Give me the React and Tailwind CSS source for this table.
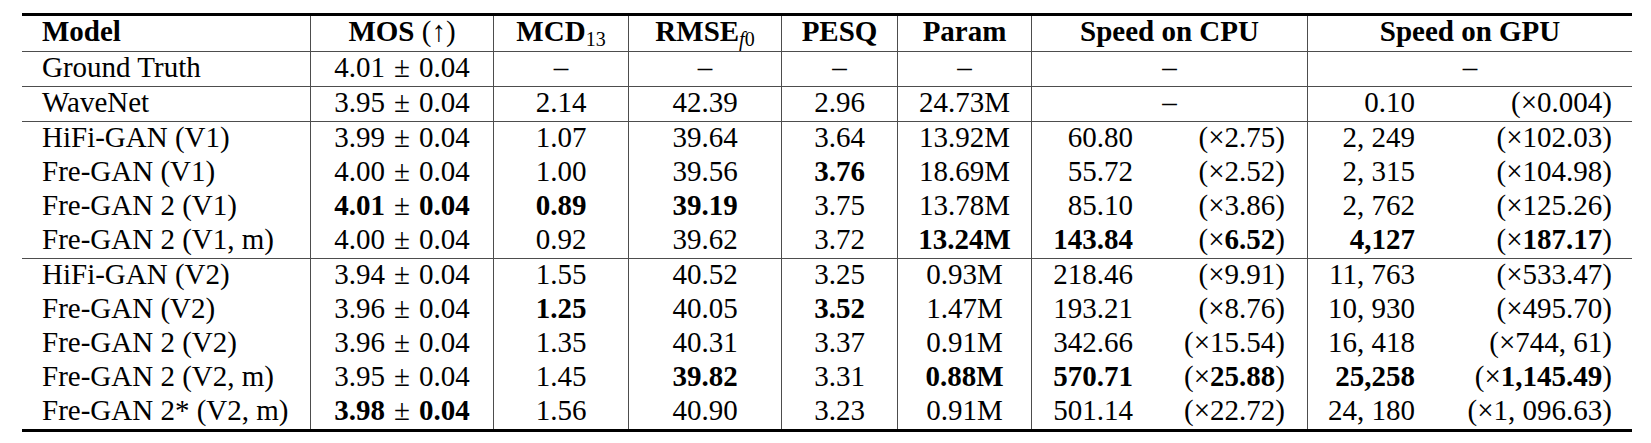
import React from 'react';

const cols = 'grid grid-cols-[288px_183px_135px_153px_116px_134px_276px_325px]';

const B = ({ children }) => <span className="font-bold">{children}</span>;

// math-style ± with wider spacing, like LaTeX binary operators
const PM = () => <span className="px-[9px] font-normal">±</span>;

const pm = (a, b, bold) =>
  bold ? (
    <>
      <B>{a}</B>
      <PM />
      <B>{b}</B>
    </>
  ) : (
    <>
      {a}
      <PM />
      {b}
    </>
  );

const ratio = (v, bold) => (
  <>
    (×{bold ? <B>{v}</B> : v})
  </>
);

// speed cells: [value, ratio] or null for a dash
const rows = [
  {
    group: 0,
    name: 'Ground Truth',
    mos: pm('4.01', '0.04'),
    mcd: '–', rmse: '–', pesq: '–', param: '–',
    cpu: null, gpu: null,
  },
  {
    group: 0,
    name: 'WaveNet',
    mos: pm('3.95', '0.04'),
    mcd: '2.14', rmse: '42.39', pesq: '2.96', param: '24.73M',
    cpu: null, gpu: ['0.10', ratio('0.004')],
  },
  {
    group: 1,
    name: 'HiFi-GAN (V1)',
    mos: pm('3.99', '0.04'),
    mcd: '1.07', rmse: '39.64', pesq: '3.64', param: '13.92M',
    cpu: ['60.80', ratio('2.75')], gpu: ['2, 249', ratio('102.03')],
  },
  {
    group: 1,
    name: 'Fre-GAN (V1)',
    mos: pm('4.00', '0.04'),
    mcd: '1.00', rmse: '39.56', pesq: <B>3.76</B>, param: '18.69M',
    cpu: ['55.72', ratio('2.52')], gpu: ['2, 315', ratio('104.98')],
  },
  {
    group: 1,
    name: 'Fre-GAN 2 (V1)',
    mos: pm('4.01', '0.04', true),
    mcd: <B>0.89</B>, rmse: <B>39.19</B>, pesq: '3.75', param: '13.78M',
    cpu: ['85.10', ratio('3.86')], gpu: ['2, 762', ratio('125.26')],
  },
  {
    group: 1,
    name: 'Fre-GAN 2 (V1, m)',
    mos: pm('4.00', '0.04'),
    mcd: '0.92', rmse: '39.62', pesq: '3.72', param: <B>13.24M</B>,
    cpu: [<B>143.84</B>, ratio('6.52', true)], gpu: [<B>4,127</B>, ratio('187.17', true)],
    last: true,
  },
  {
    group: 2,
    name: 'HiFi-GAN (V2)',
    mos: pm('3.94', '0.04'),
    mcd: '1.55', rmse: '40.52', pesq: '3.25', param: '0.93M',
    cpu: ['218.46', ratio('9.91')], gpu: ['11, 763', ratio('533.47')],
  },
  {
    group: 2,
    name: 'Fre-GAN (V2)',
    mos: pm('3.96', '0.04'),
    mcd: <B>1.25</B>, rmse: '40.05', pesq: <B>3.52</B>, param: '1.47M',
    cpu: ['193.21', ratio('8.76')], gpu: ['10, 930', ratio('495.70')],
  },
  {
    group: 2,
    name: 'Fre-GAN 2 (V2)',
    mos: pm('3.96', '0.04'),
    mcd: '1.35', rmse: '40.31', pesq: '3.37', param: '0.91M',
    cpu: ['342.66', ratio('15.54')], gpu: ['16, 418', ratio('744, 61')],
  },
  {
    group: 2,
    name: 'Fre-GAN 2 (V2, m)',
    mos: pm('3.95', '0.04'),
    mcd: '1.45', rmse: <B>39.82</B>, pesq: '3.31', param: <B>0.88M</B>,
    cpu: [<B>570.71</B>, ratio('25.88', true)], gpu: [<B>25,258</B>, ratio('1,145.49', true)],
  },
  {
    group: 2,
    name: 'Fre-GAN 2* (V2, m)',
    mos: pm('3.98', '0.04', true),
    mcd: '1.56', rmse: '40.90', pesq: '3.23', param: '0.91M',
    cpu: ['501.14', ratio('22.72')], gpu: ['24, 180', ratio('1, 096.63')],
  },
];

function Cell({ children }) {
  return <div className="border-l border-[#4d4d4d] text-center whitespace-nowrap">{children}</div>;
}

function Speed({ data, valueW, padR }) {
  if (!data) return <Cell>–</Cell>;
  return (
    <div className="border-l border-[#4d4d4d] flex whitespace-nowrap">
      <span className={`${valueW} text-right`}>{data[0]}</span>
      <span className={`flex-1 text-right ${padR}`}>{data[1]}</span>
    </div>
  );
}

export default function App() {
  return (
    <div className="min-h-screen bg-white pt-[13px] pl-[22px] text-black font-[Liberation_Serif] text-[29px] leading-[30px]">
      <div className="w-[1610px] border-t-[3px] border-b-[3px] border-black">
        {/* header */}
        <div className={`${cols} h-[36px] border-b border-[#4d4d4d] font-bold`}>
          <div className="pl-[20px]">Model</div>
          <Cell>
            MOS <span className="font-normal">(↑)</span>
          </Cell>
          <Cell>
            MCD<sub className="font-normal text-[20px]">13</sub>
          </Cell>
          <Cell>
            RMSE<sub className="font-normal text-[20px]"><i>f</i>0</sub>
          </Cell>
          <Cell>PESQ</Cell>
          <Cell>Param</Cell>
          <Cell>Speed on CPU</Cell>
          <Cell>Speed on GPU</Cell>
        </div>

        {rows.map((r, i) => {
          const line = r.group === 0 || r.last;
          return (
            <div
              key={i}
              className={`${cols} ${line ? 'h-[35px] border-b border-[#4d4d4d]' : 'h-[34px]'}`}
            >
              <div className="pl-[20px] whitespace-nowrap">{r.name}</div>
              <Cell>{r.mos}</Cell>
              <Cell>{r.mcd}</Cell>
              <Cell>{r.rmse}</Cell>
              <Cell>{r.pesq}</Cell>
              <Cell>{r.param}</Cell>
              <Speed data={r.cpu} valueW="w-[101px]" padR="pr-[22px]" />
              <Speed data={r.gpu} valueW="w-[107px]" padR="pr-[20px]" />
            </div>
          );
        })}
      </div>
    </div>
  );
}
